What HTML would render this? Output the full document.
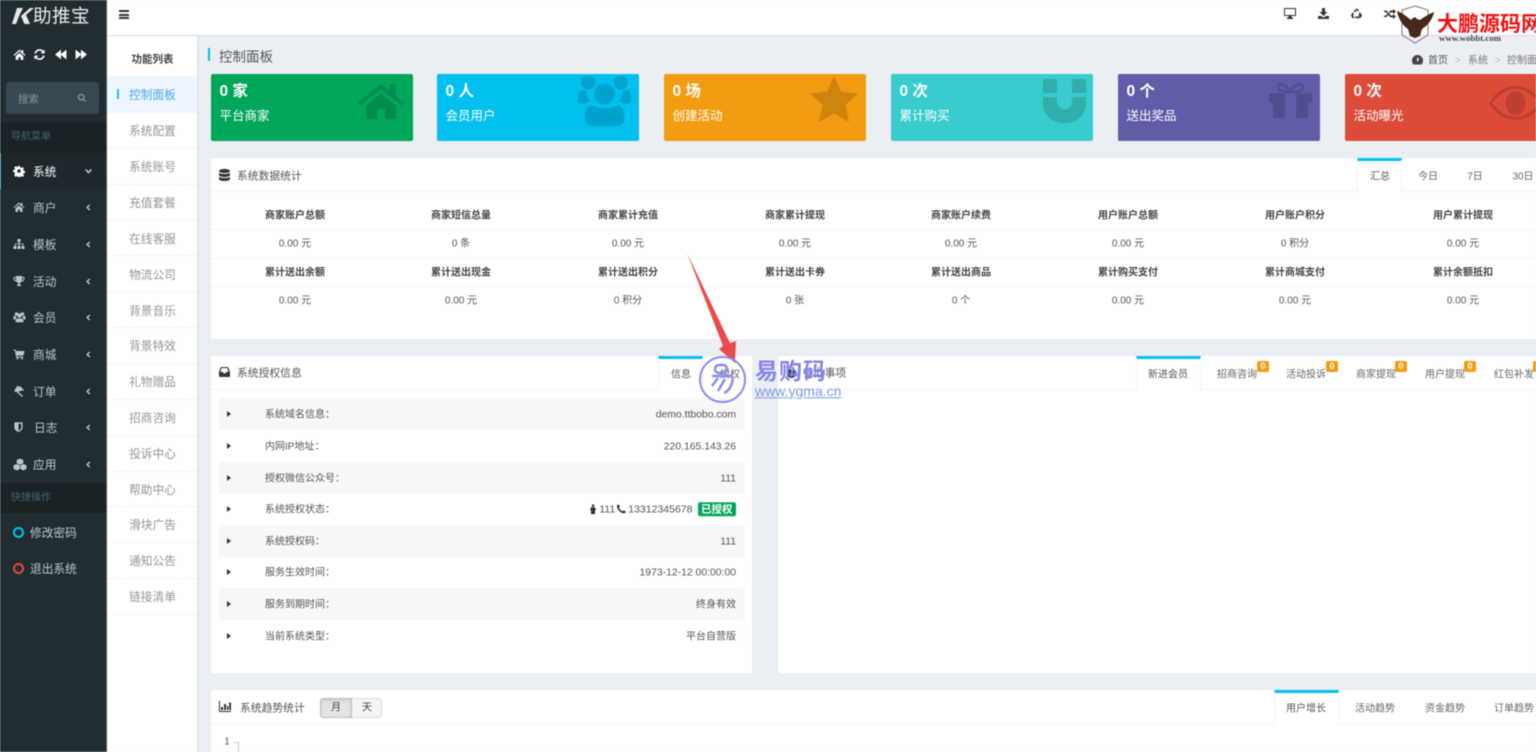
<!DOCTYPE html>
<html lang="zh"><head><meta charset="utf-8"><title>控制面板</title>
<style>
*{box-sizing:border-box}
html,body{margin:0;padding:0;width:1536px;height:752px;overflow:hidden;background:#ebeef3}
body{font-family:"Liberation Sans","Noto Sans CJK SC",sans-serif;font-size:11.7px;color:#555;position:relative}
#root{position:absolute;left:0;top:0;width:1536px;height:752px;overflow:hidden;filter:blur(.45px)}
.a{position:absolute}
.c,.l,.r{position:absolute;white-space:nowrap;line-height:1}
.c{transform:translate(-50%,-34%)}
.l{transform:translateY(-34%)}
.r{transform:translate(-100%,-34%)}
.m{color:#b8c7ce;font-size:11.7px}
.n{color:#959595;font-size:11.7px}
.sep{position:absolute;left:107px;width:90px;height:0;border-top:1px dashed #eee}
.card{position:absolute;top:74px;width:202px;height:67px;border-radius:2px;color:#fff}
.card b{position:absolute;left:8.500px;top:9px;font-size:15.5px;line-height:18px}
.card span{position:absolute;left:8.500px;top:35px;font-size:12.5px;line-height:15px}
.card svg{position:absolute;fill:rgba(0,0,0,.15)}
.panel{position:absolute;background:#fff;border-radius:2px}
.h{position:absolute;left:0;right:0;top:33px;border-top:1px solid #f4f4f4}
.tab{position:absolute;top:0;height:34px;border-top:3px solid #00c0ef;border-left:1px solid #f4f4f4;border-right:1px solid #f4f4f4;background:#fff}
.s{font-size:10px;color:#555}
.b{font-size:10px;color:#444;font-weight:bold}
.s.c,.b.c{transform:translate(-50%,-35%)}
.bd{position:absolute;width:12px;height:11px;background:#f39c12;color:#fff;font-size:9px;font-weight:bold;line-height:11px;text-align:center;border-radius:2px}
.rw{position:absolute;left:8px;width:525px;height:32px}
.rw.o{background:#f7f7f7}
.arr{position:absolute;left:8px;top:12.5px;width:0;height:0;border-left:4px solid #333;border-top:3px solid transparent;border-bottom:3px solid transparent}
.rw .k{position:absolute;left:46px;top:50%;transform:translateY(-35%);font-size:10px;line-height:1;white-space:nowrap;color:#555}
.rw .v{position:absolute;right:8px;top:50%;transform:translateY(-35%);font-size:10.4px;line-height:1;white-space:nowrap;color:#555}
svg.i{position:absolute}
</style></head><body><div id="root">

<svg width="0" height="0" style="position:absolute"><defs>
<symbol id="home" viewBox="0 0 24 24"><path d="M12 3 1 13l1.300 1.500L12 6l9.700 8.500L23 13l-4-3.600V4h-3v2.700zM5 15v7h5v-5h4v5h5v-7l-7-6z"/></symbol>
<symbol id="gear" viewBox="0 0 24 24"><path fill-rule="evenodd" d="M10 2h4l.6 3 2 .9 2.600-1.700 2.800 2.800-1.700 2.600.8 2 2.900.5v4l-2.900.6-.8 1.900 1.700 2.600-2.800 2.800-2.600-1.700-2 .8-.6 2.900h-4l-.6-2.900-2-.8-2.600 1.700L2.400 19l1.700-2.600-.8-1.900L.4 14v-4l2.900-.5.800-2L2.400 5 5.200 2.200l2.600 1.700 2-.9zM12 8.500a3.500 3.500 0 1 0 0 7 3.500 3.500 0 0 0 0-7z"/></symbol>
<symbol id="sitemap" viewBox="0 0 24 24"><path d="M9 2h6v6h-2v3h7.500v5H23v6h-6v-6h2v-3.500h-6V16h2v6H9v-6h2v-3.500H5V16h2v6H1v-6h2.500v-5H11V8H9z"/></symbol>
<symbol id="trophy" viewBox="0 0 24 24"><path fill-rule="evenodd" d="M6 2h12v2h5v3c0 3.500-3 6-6 6.500-.8 1.200-2 2-3.500 2.300V19H16v3H8v-3h2.500v-3.200C9 15.500 7.800 14.700 7 13.500 4 13 1 10.500 1 7V4h5zM3 6v1c0 2 1.500 3.500 3.500 4.200C6.200 9.700 6 8 6 6zm15 0c0 2-.2 3.700-.5 5.200C19.500 10.500 21 9 21 7V6z"/></symbol>
<symbol id="users" viewBox="0 0 24 24"><circle cx="6" cy="6" r="3.500"/><circle cx="18" cy="6" r="3.500"/><circle cx="12" cy="9" r="4.500"/><path d="M0 11c1-1 3-1.500 4.500-1 .2 2 1 3 2 4-1.500.5-2.500 1.500-3 3H0zM24 11c-1-1-3-1.500-4.500-1-.2 2-1 3-2 4 1.500.5 2.500 1.500 3 3H24zM7 15c2 0 8-.2 10 0 2 .5 3 3 3 6 0 1-1 1.500-2 1.500H6c-1 0-2-.5-2-1.500 0-3 1-5.500 3-6z"/></symbol>
<symbol id="cart" viewBox="0 0 24 24"><path d="M1 3h4.500l.6 3H23l-2 9H8l.4 2H20v2H6.500L3.800 5H1z"/><circle cx="9" cy="21" r="2"/><circle cx="18" cy="21" r="2"/></symbol>
<symbol id="gavel" viewBox="0 0 24 24"><path d="M9 1l9 9-3 3-1.500-1.500-2.500 2.500 9 8-2 2-9-8.500L7 13l-1.500 1.500-3-3zM14 2l8 8-2 2-8-8z"/></symbol>
<symbol id="shield" viewBox="0 0 24 24"><path fill-rule="evenodd" d="M3 2h18v11c0 5-5 8-9 10C8 21 3 18 3 13zM12 5v15c3-1.500 6-4 6-7V5z"/></symbol>
<symbol id="cubes" viewBox="0 0 24 24"><path d="M12 1l6 2.500V10l-6 2.500L6 10V3.500zM6 11l6 2.500V20l-6 3-6-3v-6.500zM18 11l6 2.500V20l-6 3-5-3v-6.500z"/></symbol>
<symbol id="refresh" viewBox="0 0 24 24"><path d="M12 2c3 0 5.300 1.200 7 3l2.500-2.500V10h-7.500l3-3c-1.200-1.300-3-2-5-2-3 0-5.500 2-6.300 5H2.500C3.400 5.500 7.200 2 12 2zM2.500 14h7.500l-3 3c1.200 1.300 3 2 5 2 3 0 5.500-2 6.300-5h3.200c-.9 4.500-4.700 8-9.500 8-3 0-5.300-1.200-7-3l-2.500 2.500z"/></symbol>
<symbol id="back" viewBox="0 0 24 24"><path d="M12 3v8L22 3v18L12 13v8L1 12z"/></symbol>
<symbol id="fwd" viewBox="0 0 24 24"><path d="M12 3v8L2 3v18l10-8v8l11-9z"/></symbol>
<symbol id="search" viewBox="0 0 24 24"><path fill-rule="evenodd" d="M10 2a8 8 0 0 1 6.500 12.700L22 20l-2 2-5.400-5.500A8 8 0 1 1 10 2zm0 3a5 5 0 1 0 0 10 5 5 0 0 0 0-10z"/></symbol>
<symbol id="ch-l" viewBox="0 0 24 24"><path d="M16 3l3 3-7 6 7 6-3 3L6 12z"/></symbol>
<symbol id="ch-d" viewBox="0 0 24 24"><path d="M3 8l3-3 6 7 6-7 3 3-9 10z"/></symbol>
</defs></svg>

<!-- main sidebar -->
<div class="a" style="left:0;top:0;width:107px;height:752px;background:#222d32"></div>
<div class="a" style="left:106px;top:0;width:1px;height:752px;background:#4a5559"></div>
<svg class="a" style="left:12px;top:7px" width="22" height="18" viewBox="0 0 22 18"><path d="M5 1h6L7 9l-3 8H0zM18 1h4l-8 7 4 9h-5.500l-3.500-8z" fill="#e8e8e8"/></svg>
<div class="l" style="left:33px;top:13.500px;font-size:18.5px;color:#ececec;letter-spacing:.5px">助推宝</div>
<svg class="i" style="left:13px;top:48px;fill:#fff" width="13" height="13"><use href="#home"/></svg>
<svg class="i" style="left:33px;top:48px;fill:#fff" width="13" height="13"><use href="#refresh"/></svg>
<svg class="i" style="left:54px;top:48px;fill:#fff" width="14" height="13"><use href="#back"/></svg>
<svg class="i" style="left:74px;top:48px;fill:#fff" width="14" height="13"><use href="#fwd"/></svg>
<div class="a" style="left:6px;top:82px;width:93px;height:32px;background:#374850;border-radius:3px"></div>
<div class="l" style="left:18px;top:98px;font-size:10.500px;color:#8a979d">搜索</div>
<svg class="i" style="left:77px;top:93px;fill:#8a979d" width="10" height="10"><use href="#search"/></svg>
<div class="a" style="left:0;top:122px;width:106px;height:31px;background:#1a2226"></div>
<div class="l" style="left:11px;top:136px;font-size:10px;color:#4b646f">导航菜单</div>
<div class="a" style="left:0;top:153px;width:106px;height:36px;background:#1e282c;border-left:1px solid #3c8dbc"></div>
<svg class="i" style="left:13px;top:165px;fill:#fff" width="12" height="12"><use href="#gear"/></svg>
<div class="l" style="left:33px;top:171px;color:#fff">系统</div>
<svg class="i" style="left:84px;top:167px;fill:#b8c7ce" width="9" height="9"><use href="#ch-d"/></svg>

<svg class="i" style="left:13px;top:201px;fill:#b8c7ce" width="12" height="12"><use href="#home"/></svg><div class="l m" style="left:33px;top:207px">商户</div><svg class="i" style="left:84px;top:203px;fill:#b8c7ce" width="8" height="9"><use href="#ch-l"/></svg>
<svg class="i" style="left:13px;top:238px;fill:#b8c7ce" width="12" height="12"><use href="#sitemap"/></svg><div class="l m" style="left:33px;top:244px">模板</div><svg class="i" style="left:84px;top:240px;fill:#b8c7ce" width="8" height="9"><use href="#ch-l"/></svg>
<svg class="i" style="left:13px;top:275px;fill:#b8c7ce" width="12" height="12"><use href="#trophy"/></svg><div class="l m" style="left:33px;top:281px">活动</div><svg class="i" style="left:84px;top:277px;fill:#b8c7ce" width="8" height="9"><use href="#ch-l"/></svg>
<svg class="i" style="left:13px;top:311px;fill:#b8c7ce" width="13" height="12"><use href="#users"/></svg><div class="l m" style="left:33px;top:317px">会员</div><svg class="i" style="left:84px;top:313px;fill:#b8c7ce" width="8" height="9"><use href="#ch-l"/></svg>
<svg class="i" style="left:13px;top:348px;fill:#b8c7ce" width="12" height="12"><use href="#cart"/></svg><div class="l m" style="left:33px;top:354px">商城</div><svg class="i" style="left:84px;top:350px;fill:#b8c7ce" width="8" height="9"><use href="#ch-l"/></svg>
<svg class="i" style="left:13px;top:385px;fill:#b8c7ce" width="12" height="12"><use href="#gavel"/></svg><div class="l m" style="left:33px;top:391px">订单</div><svg class="i" style="left:84px;top:387px;fill:#b8c7ce" width="8" height="9"><use href="#ch-l"/></svg>
<svg class="i" style="left:13px;top:421px;fill:#b8c7ce" width="11" height="12"><use href="#shield"/></svg><div class="l m" style="left:34px;top:427px">日志</div><svg class="i" style="left:84px;top:423px;fill:#b8c7ce" width="8" height="9"><use href="#ch-l"/></svg>
<svg class="i" style="left:13px;top:458px;fill:#b8c7ce" width="14" height="13"><use href="#cubes"/></svg><div class="l m" style="left:33px;top:464px">应用</div><svg class="i" style="left:84px;top:460px;fill:#b8c7ce" width="8" height="9"><use href="#ch-l"/></svg>

<div class="a" style="left:0;top:483px;width:106px;height:30px;background:#1a2226"></div>
<div class="l" style="left:11px;top:497px;font-size:10px;color:#4b646f">快捷操作</div>
<div class="a" style="left:13px;top:527px;width:11px;height:11px;border:2px solid #00c0ef;border-radius:50%"></div>
<div class="l m" style="left:30px;top:532px">修改密码</div>
<div class="a" style="left:13px;top:563px;width:11px;height:11px;border:2px solid #dd4b39;border-radius:50%"></div>
<div class="l m" style="left:30px;top:568px">退出系统</div>

<!-- secondary sidebar -->
<div class="a" style="left:107px;top:35px;width:90px;height:717px;background:#fff"></div>
<div class="a" style="left:197px;top:36px;width:2px;height:716px;background:#e3e6ec"></div>
<div class="c" style="left:152.500px;top:58px;font-size:10.500px;font-weight:bold;color:#444">功能列表</div>
<div class="a" style="left:107px;top:76px;width:90px;height:36px;background:#edf5ff"></div>
<div class="a" style="left:117px;top:89px;width:2px;height:10px;background:#2db7f5"></div>
<div class="c" style="left:152.500px;top:94px;color:#4aa8f0">控制面板</div>
<div class="c n" style="left:152.500px;top:130px">系统配置</div>
<div class="c n" style="left:152.500px;top:166px">系统账号</div>
<div class="c n" style="left:152.500px;top:202px">充值套餐</div>
<div class="c n" style="left:152.500px;top:238px">在线客服</div>
<div class="c n" style="left:152.500px;top:274px">物流公司</div>
<div class="c n" style="left:152.500px;top:310px">背景音乐</div>
<div class="c n" style="left:152.500px;top:345px">背景特效</div>
<div class="c n" style="left:152.500px;top:381px">礼物赠品</div>
<div class="c n" style="left:152.500px;top:417px">招商咨询</div>
<div class="c n" style="left:152.500px;top:453px">投诉中心</div>
<div class="c n" style="left:152.500px;top:489px">帮助中心</div>
<div class="c n" style="left:152.500px;top:524px">滑块广告</div>
<div class="c n" style="left:152.500px;top:560px">通知公告</div>
<div class="c n" style="left:152.500px;top:596px">链接清单</div>
<div class="sep" style="top:112px"></div><div class="sep" style="top:148px"></div><div class="sep" style="top:184px"></div><div class="sep" style="top:220px"></div><div class="sep" style="top:255px"></div><div class="sep" style="top:291px"></div><div class="sep" style="top:327px"></div><div class="sep" style="top:363px"></div><div class="sep" style="top:399px"></div><div class="sep" style="top:435px"></div><div class="sep" style="top:471px"></div><div class="sep" style="top:506px"></div><div class="sep" style="top:542px"></div><div class="sep" style="top:578px"></div><div class="sep" style="top:614px"></div>

<!-- top header -->
<div class="a" style="left:107px;top:0;width:1429px;height:36px;background:#fff;border-bottom:1px solid #d8dce2"></div>
<div class="a" style="left:119px;top:10px;width:10px;height:2px;background:#333"></div>
<div class="a" style="left:119px;top:13.500px;width:10px;height:2px;background:#333"></div>
<div class="a" style="left:119px;top:17px;width:10px;height:2px;background:#333"></div>
<svg class="i" style="left:1284px;top:8px" width="12" height="11" viewBox="0 0 12 11"><path fill-rule="evenodd" d="M0 0h12v8H7.500v1.500H9V11H3V9.500h1.500V8H0zM1 1v6h10V1z" fill="#333"/></svg>
<svg class="i" style="left:1318px;top:8px" width="11" height="11" viewBox="0 0 11 11"><path d="M4 0h3v4h2.500L5.500 8 1.500 4H4zM0 8h3l2.500 1.500L8 8h3v3H0z" fill="#333"/></svg>
<svg class="i" style="left:1351px;top:8px" width="11" height="11" viewBox="0 0 11 11"><path d="M5.500.5 8 2 7 3.800 5.500 2 4.200 4.200 2.500 3.200zM9 4l2 3.500L9.500 10H7.500V8.500h1L7.500 6.500zM1.500 4.500 3 5.500 2 7.500l1 1.500v1.300H1.500L0 7.500zM4 8.500h2.500v-1L8 9.500 6.500 11v-1H4z" fill="#333"/></svg>
<svg class="i" style="left:1384px;top:8px" width="12" height="11" viewBox="0 0 12 11"><path d="M0 2.500h2.500L7 7.500h2V6l3 2.500L9 11V9.300H6.200L1.800 4H0zM0 7.500h1.800l1.500-1.500 1 1.200L2.500 9H0zM6.200 2.500H9V1l3 2.500L9 6V4.200H7l-1 1.200-1-1.200z" fill="#333"/></svg>

<!-- page title -->
<div class="a" style="left:208px;top:48px;width:2px;height:13px;background:#00c0ef"></div>
<div class="l" style="left:219px;top:55px;font-size:13.500px;color:#555">控制面板</div>
<svg class="i" style="left:1412px;top:55px" width="11" height="10" viewBox="0 0 11 10"><path fill-rule="evenodd" d="M5.500 0a5.500 5.500 0 0 1 5.500 5.500c0 1.500-.5 3-1.300 4H1.300C.5 8.500 0 7 0 5.500A5.500 5.500 0 0 1 5.500 0zM5 3v3.500h1.200L7 3z" fill="#444"/></svg>
<div class="l" style="left:1428px;top:60px;font-size:10px;color:#555">首页</div>
<div class="l" style="left:1455px;top:60px;font-size:10px;color:#bbb">&gt;</div>
<div class="l" style="left:1468px;top:60px;font-size:10px;color:#777">系统</div>
<div class="l" style="left:1495px;top:60px;font-size:10px;color:#bbb">&gt;</div>
<div class="l" style="left:1507px;top:60px;font-size:10px;color:#777">控制面板</div>

<!-- stat cards -->
<div class="card" style="left:211px;background:#00a65a"><b>0 家</b><span>平台商家</span>
<svg style="left:147px;top:8px" width="46" height="38" viewBox="0 0 46 38"><path d="M23 2 0 21l2 2.500L23 7l21 16.500 2-2.500-8-6.500V2h-6v7zM8 24v13h11V27h8v10h11V24L23 11z"/></svg></div>
<div class="card" style="left:437px;background:#00c0ef"><b>0 人</b><span>会员用户</span>
<svg style="left:140px;top:2px" width="56" height="50" viewBox="0 0 56 50"><circle cx="11" cy="6.500" r="7"/><circle cx="44" cy="6.500" r="7"/><circle cx="27.500" cy="18" r="10.500"/><path d="M3 15c2-1 4-1 6 0 .5 4 1.500 8 4 10-2 .5-4 1.500-5 3-3 0-7-1-7-3 0-4 0-8 2-10zM52 15c-2-1-4-1-6 0-.5 4-1.500 8-4 10 2 .5 4 1.500 5 3 3 0 7-1 7-3 0-4 0-8-2-10zM14 29c3 2 8 3 14 3s10-1 13-3c4 2 6 5 6 10v5c0 3-3 6-6 6H14c-3 0-6-3-6-6v-5c0-5 2-8 6-10z"/></svg></div>
<div class="card" style="left:664px;background:#f39c12"><b>0 场</b><span>创建活动</span>
<svg style="left:145px;top:2px" width="50" height="46" viewBox="0 0 50 46"><path d="M25 0l7 15.500 17 2-12.500 11.500L40 46 25 37.500 10 46l3.500-17L1 17.500l17-2z"/></svg></div>
<div class="card" style="left:891px;background:#39cccc"><b>0 次</b><span>累计购买</span>
<svg style="left:152px;top:5px" width="43" height="44" viewBox="0 0 43 44"><rect x="0" width="14" height="14" rx="1"/><rect x="29" width="14" height="14" rx="1"/><path d="M0 18h14v5a7.500 7.500 0 0 0 15 0v-5h14v6c0 12-9 20-21.500 20S0 36 0 24z"/></svg></div>
<div class="card" style="left:1118px;background:#605ca8"><b>0 个</b><span>送出奖品</span>
<svg style="left:151px;top:8px" width="43" height="36" viewBox="0 0 43 36"><path fill-rule="evenodd" d="M0 11h16v10h11V11h16v10h-4v15H27V21H16v15H4V21H0z"/><path d="M21 10C15 10 9 9 9 5c0-5 7-4 12 5 5-9 12-10 13-5 0 4-6 5-13 5" style="fill:none;stroke:rgba(0,0,0,.15);stroke-width:2.500"/></svg></div>
<div class="card" style="left:1345px;background:#dd4b39"><b>0 次</b><span>活动曝光</span>
<svg style="left:144px;top:12px" width="54" height="34" viewBox="0 0 65 34" preserveAspectRatio="none"><path fill-rule="evenodd" d="M32 0c13 0 25 7 33 17-8 10-20 17-33 17S7 27 0 17C7 7 19 0 32 0zM32 3C21 3 11 9 4 17c7 8 17 14 28 14s21-6 28-14C53 9 43 3 32 3zM32 5a12 12 0 1 1 0 24 12 12 0 0 1 0-24z"/></svg></div>

<!-- stats panel -->
<div class="panel" style="left:211px;top:158px;width:1340px;height:181px"><div class="h"></div>
<div class="tab" style="left:1146px;width:45px"></div>
</div>
<svg class="i" style="left:219px;top:169px" width="11" height="12" viewBox="0 0 11 12"><path d="M5.500 0C8.500 0 11 .8 11 2s-2.500 2-5.500 2S0 3.200 0 2s2.500-2 5.500-2zM0 3.600C1 4.800 3.500 5 5.500 5s4.500-.2 5.500-1.400V6c0 1.200-2.500 2-5.500 2S0 7.200 0 6zM0 7.600C1 8.800 3.500 9 5.500 9s4.500-.2 5.500-1.400V10c0 1.200-2.500 2-5.500 2S0 11.200 0 10z" fill="#333"/></svg>
<div class="l" style="left:237px;top:175px;font-size:10.800px;color:#555">系统数据统计</div>
<div class="c s" style="left:1380px;top:176px">汇总</div>
<div class="c s" style="left:1428px;top:176px;color:#666">今日</div>
<div class="c s" style="left:1475px;top:176px;color:#666">7日</div>
<div class="c s" style="left:1523px;top:176px;color:#666">30日</div>
<div class="a" style="left:211px;top:229px;width:1325px;border-top:1px solid #f4f4f4"></div>
<div class="a" style="left:211px;top:258px;width:1325px;border-top:1px solid #f4f4f4"></div>
<div class="a" style="left:211px;top:286px;width:1325px;border-top:1px solid #f4f4f4"></div>

<div class="c b" style="left:295px;top:215px">商家账户总额</div><div class="c b" style="left:461px;top:215px">商家短信总量</div><div class="c b" style="left:628px;top:215px">商家累计充值</div><div class="c b" style="left:795px;top:215px">商家累计提现</div><div class="c b" style="left:961px;top:215px">商家账户续费</div><div class="c b" style="left:1128px;top:215px">用户账户总额</div><div class="c b" style="left:1295px;top:215px">用户账户积分</div><div class="c b" style="left:1463px;top:215px">用户累计提现</div>
<div class="c s" style="left:295px;top:243px">0.00 元</div><div class="c s" style="left:461px;top:243px">0 条</div><div class="c s" style="left:628px;top:243px">0.00 元</div><div class="c s" style="left:795px;top:243px">0.00 元</div><div class="c s" style="left:961px;top:243px">0.00 元</div><div class="c s" style="left:1128px;top:243px">0.00 元</div><div class="c s" style="left:1295px;top:243px">0 积分</div><div class="c s" style="left:1463px;top:243px">0.00 元</div>
<div class="c b" style="left:295px;top:272px">累计送出余额</div><div class="c b" style="left:461px;top:272px">累计送出现金</div><div class="c b" style="left:628px;top:272px">累计送出积分</div><div class="c b" style="left:795px;top:272px">累计送出卡券</div><div class="c b" style="left:961px;top:272px">累计送出商品</div><div class="c b" style="left:1128px;top:272px">累计购买支付</div><div class="c b" style="left:1295px;top:272px">累计商城支付</div><div class="c b" style="left:1463px;top:272px">累计余额抵扣</div>
<div class="c s" style="left:295px;top:300px">0.00 元</div><div class="c s" style="left:461px;top:300px">0.00 元</div><div class="c s" style="left:628px;top:300px">0 积分</div><div class="c s" style="left:795px;top:300px">0 张</div><div class="c s" style="left:961px;top:300px">0 个</div><div class="c s" style="left:1128px;top:300px">0.00 元</div><div class="c s" style="left:1295px;top:300px">0.00 元</div><div class="c s" style="left:1463px;top:300px">0.00 元</div>

<!-- licence panel -->
<div class="panel" style="left:211px;top:356px;width:541px;height:317px"><div class="h"></div>
<div class="tab" style="left:447px;width:45px"></div>
<div class="rw o" style="top:42px"><i class="arr"></i><span class="k">系统域名信息：</span><span class="v">demo.ttbobo.com</span></div>
<div class="rw" style="top:74px"><i class="arr"></i><span class="k">内网IP地址：</span><span class="v">220.165.143.26</span></div>
<div class="rw o" style="top:106px"><i class="arr"></i><span class="k">授权微信公众号：</span><span class="v">111</span></div>
<div class="rw" style="top:137px"><i class="arr"></i><span class="k">系统授权状态：</span><span class="v" style="display:flex;align-items:center;transform:translateY(-50%);font-size:10.500px">
<svg width="6" height="10" viewBox="0 0 6 10" style="margin-right:3px"><circle cx="3" cy="1.300" r="1.300" fill="#333"/><path d="M1 3h4l1 3H5v4H1V6H0z" fill="#333"/></svg>111
<svg width="9" height="9" viewBox="0 0 9 9" style="margin:0 2px 0 2px"><path d="M1 0l2 2-1 1.500c.5 1.500 2 3 3.500 3.500L7 6l2 2c-1 1-2 1-3 1C3 8 1 6 0 3c0-1 0-2 1-3z" fill="#333"/></svg>13312345678
<span style="background:#00a65a;color:#fff;font-weight:bold;font-size:10.500px;padding:1.500px 3.500px;border-radius:2px;margin-left:5px;line-height:10.500px">已授权</span></span></div>
<div class="rw o" style="top:169px"><i class="arr"></i><span class="k">系统授权码：</span><span class="v">111</span></div>
<div class="rw" style="top:200px"><i class="arr"></i><span class="k">服务生效时间：</span><span class="v">1973-12-12 00:00:00</span></div>
<div class="rw o" style="top:232px"><i class="arr"></i><span class="k">服务到期时间：</span><span class="v" style="font-size:10px">终身有效</span></div>
<div class="rw" style="top:264px"><i class="arr"></i><span class="k">当前系统类型：</span><span class="v" style="font-size:10px">平台自营版</span></div>
</div>
<svg class="i" style="left:219px;top:367px" width="11" height="10" viewBox="0 0 11 10"><path fill-rule="evenodd" d="M2 0h7l2 5v4c0 .6-.4 1-1 1H1c-.6 0-1-.4-1-1V5zM2.800 1 1.500 5H4l.7 1.500h1.600L7 5h2.500L8.200 1z" fill="#333"/></svg>
<div class="l" style="left:237px;top:372px;font-size:10.800px;color:#555">系统授权信息</div>
<div class="c s" style="left:681px;top:374px">信息</div>
<div class="c s" style="left:730px;top:374px;color:#666">授权</div>

<!-- todo panel -->
<div class="panel" style="left:778px;top:356px;width:770px;height:317px"><div class="h"></div>
<div class="tab" style="left:358px;width:65px"></div></div>
<svg class="i" style="left:787px;top:366px" width="9" height="12" viewBox="0 0 9 12"><path d="M5 0c1 2 4 4 4 7.500C9 10 7 12 4.500 12S0 10 0 7.500C0 5 2 4 3 2c.5 1 1 2 1 3 1-1 1-3 1-5z" fill="#333"/></svg>
<div class="l" style="left:803px;top:372px;font-size:10.800px;color:#555">待办事项</div>
<div class="c s" style="left:1168px;top:374px">新进会员</div>
<div class="c s" style="left:1237px;top:374px;color:#666">招商咨询</div><div class="bd" style="left:1257px;top:361px">0</div>
<div class="c s" style="left:1306px;top:374px;color:#666">活动投诉</div><div class="bd" style="left:1326px;top:361px">0</div>
<div class="c s" style="left:1376px;top:374px;color:#666">商家提现</div><div class="bd" style="left:1395px;top:361px">0</div>
<div class="c s" style="left:1445px;top:374px;color:#666">用户提现</div><div class="bd" style="left:1464px;top:361px">0</div>
<div class="c s" style="left:1514px;top:374px;color:#666">红包补发</div><div class="bd" style="left:1533px;top:361px">0</div>

<!-- trend panel -->
<div class="panel" style="left:211px;top:690px;width:1340px;height:70px"><div class="h"></div>
<div class="tab" style="left:1063px;width:65px"></div></div>
<svg class="i" style="left:219px;top:701px" width="12" height="11" viewBox="0 0 12 11"><path d="M0 0h1v10h11v1H0zM2 6h2v3H2zM5 3h2v6H5zM8 5h1.500v4H8zM10.200 1.500H12V9h-1.800z" fill="#333"/></svg>
<div class="l" style="left:240px;top:707px;font-size:10.800px;color:#555">系统趋势统计</div>
<div class="a" style="left:320px;top:698px;width:32px;height:20px;background:#e4e4e4;border:1px solid #bbb;border-radius:3px 0 0 3px;box-shadow:inset 0 2px 3px rgba(0,0,0,.1)"></div>
<div class="a" style="left:352px;top:698px;width:30px;height:20px;background:#f4f4f4;border:1px solid #ddd;border-left:0;border-radius:0 3px 3px 0"></div>
<div class="c s" style="left:336px;top:707px;color:#444">月</div>
<div class="c s" style="left:367px;top:707px;color:#444">天</div>
<div class="c s" style="left:1306px;top:708px">用户增长</div>
<div class="c s" style="left:1375px;top:708px;color:#666">活动趋势</div>
<div class="c s" style="left:1445px;top:708px;color:#666">资金趋势</div>
<div class="c s" style="left:1514px;top:708px;color:#666">订单趋势</div>
<div class="c s" style="left:227px;top:741px">1</div>
<div class="a" style="left:233px;top:742px;width:5px;border-top:1px solid #ccc"></div>
<div class="a" style="left:238px;top:742px;height:10px;border-left:1px solid #ccc"></div>

<!-- overlays: arrow -->
<svg class="a" style="left:680px;top:250px" width="62" height="116" viewBox="0 0 62 116"><path d="M7 3 50 93 56 91 55 113 39 99 43 96z" fill="#ea4a4a"/></svg>

<!-- ygma watermark -->
<div class="a" style="left:699px;top:356px;width:47px;height:47px;border:2px solid #8c8cf0;border-radius:50%"></div>
<svg class="a" style="left:708px;top:362px" width="30" height="36" viewBox="0 0 30 36" fill="none" stroke="#8c8cf0" stroke-width="2.500"><rect x="7" y="3" width="12" height="8" rx="4"/><path d="M4 14h20c2 5-2 15-8 17M10 16 4 24M17 17l-7 12"/></svg>
<div class="l" style="left:755px;top:368px;font-size:23px;font-weight:bold;color:#8585ee;letter-spacing:1px">易购码</div>
<div class="l" style="left:755px;top:389px;font-size:14px;color:#7a9ae0;text-decoration:underline">www.ygma.cn</div>

<!-- eagle watermark -->
<svg class="a" style="left:1396px;top:5px" width="40" height="39" viewBox="0 0 40 39"><path d="M19 1 32 5V30L19 38 6 30V5z" fill="none" stroke="#8a766c" stroke-width="1"/><path d="M1 6C7 8 11 12 15 15L17 13 19 12 21 14 24 15C28 12 33 9 38 7 37 14 31 21 26 24L24 31 19 33 14 31 12 24C7 21 2 13 1 6z" fill="#46291c"/></svg>
<div class="l" style="left:1437px;top:20.500px;font-size:21px;font-weight:bold;color:#f01010">大鹏源码网</div>
<div class="l" style="left:1439px;top:37px;font-family:'Liberation Serif','Noto Serif CJK SC',serif;font-size:8.800px;font-weight:bold;color:#444">www.wobbt.com</div>

</div></body></html>
